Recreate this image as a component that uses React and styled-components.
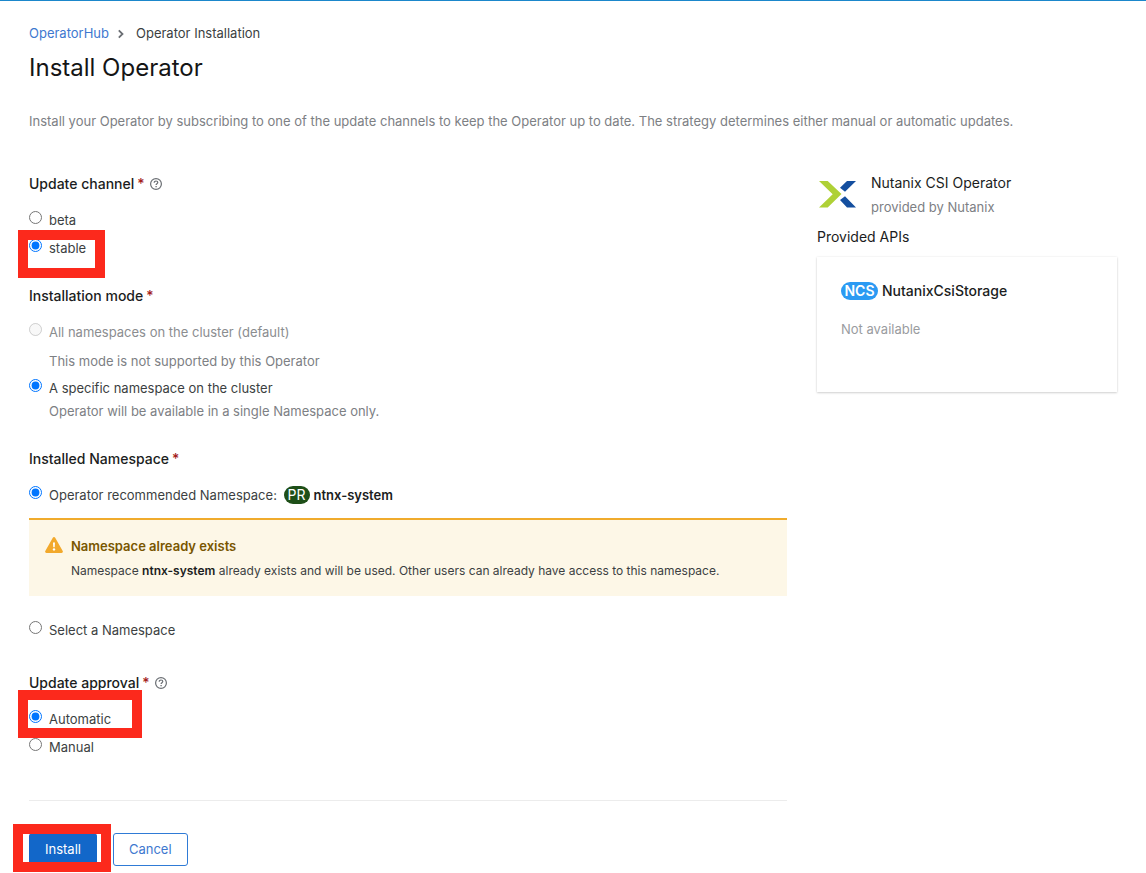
import React from "react";
import styled, { createGlobalStyle } from "styled-components";

const GlobalStyle = createGlobalStyle`
  *, *::before, *::after { box-sizing: border-box; }
  body {
    margin: 0;
    background: #fff;
    color: #3c3f42;
    font-family: Inter, "Liberation Sans", sans-serif;
    font-size: 13px;
    line-height: 20px;
  }
  h1, h2, h3, p, ol, fieldset, legend { margin: 0; padding: 0; border: 0; font-weight: 400; }
`;

const Page = styled.div`
  border-top: 1px solid #1b87cb;
  padding: 22px 29px 0;
`;

const Crumbs = styled.ol`
  display: flex;
  align-items: center;
  list-style: none;
  line-height: 21px;
  font-size: 13px;
`;

const Crumb = styled.li`
  display: flex;
  align-items: center;
  a { color: #3e78cf; text-decoration: none; }
  svg { margin: 0 11px 0 8px; }
`;

const Title = styled.h1`
  margin-top: 8px;
  font-size: 24px;
  line-height: 32px;
  color: #151515;
`;

const Intro = styled.p`
  margin-top: 27px;
  line-height: 21px;
  color: #7d8084;
`;

const Columns = styled.div`
  display: grid;
  grid-template-columns: minmax(0, 1fr) 300px;
  column-gap: 30px;
  margin-top: 42px;
`;

const Group = styled.fieldset`
  min-width: 0;
  margin-bottom: ${(p) => p.$after || 24}px;
`;

const Legend = styled.legend`
  display: flex;
  align-items: center;
  margin-bottom: 12px;
  font-size: 14px;
  font-weight: 500;
  line-height: 20px;
  color: #1b1d21;
  svg { margin-left: 5px; }
`;

const Star = styled.span`
  margin-left: 3px;
  color: #a3201a;
`;

const Choice = styled.label`
  position: relative;
  display: flex;
  align-items: flex-start;
  width: fit-content;
  gap: 7px;
  line-height: 28px;
  color: ${(p) => (p.$muted ? "#8b8d90" : "#3c3f42")};
`;

const Radio = styled.input`
  flex: none;
  width: 13px;
  height: 13px;
  margin: 5px 0 0;
`;

const Help = styled.p`
  margin: ${(p) => (p.$spaced ? "4px 0 2px" : "-2px 0 0")};
  padding-left: 20px;
  line-height: 22px;
  color: #7d8084;
`;

const Badge = styled.span`
  display: inline-flex;
  align-items: center;
  justify-content: center;
  height: 18px;
  width: ${(p) => p.$width}px;
  margin-right: 4px;
  margin-left: ${(p) => p.$before || 0}px;
  border-radius: 9px;
  background: ${(p) => p.$color};
  color: #fff;
  font-size: 14px;
  font-weight: ${(p) => p.$weight || 400};
  line-height: 18px;
`;

const Strong = styled.strong`
  font-weight: 600;
  color: #1b1d21;
`;

const Alert = styled.div`
  display: flex;
  gap: 8px;
  margin: 9px 0 20px;
  padding: 16px 16px 14px;
  border-top: 2px solid #f0ab2c;
  background: #fdf7e7;
  svg { flex: none; margin-top: 1px; }
`;

const AlertTitle = styled.h2`
  font-size: 13px;
  font-weight: 600;
  line-height: 20px;
  color: #795600;
`;

const AlertText = styled.p`
  margin-top: 4px;
  font-size: 12px;
  line-height: 22px;
`;

const Actions = styled.div`
  display: flex;
  gap: 16px;
  margin-top: 39px;
  padding: 32px 0 7px;
  border-top: 1px solid #ececec;
`;

const ActionSlot = styled.div`
  position: relative;
`;

const Button = styled.button`
  height: 33px;
  padding: 0 15px 2px;
  border: 1px solid ${(p) => (p.$primary ? "#1267c9" : "#2f7bd6")};
  border-radius: 3px;
  background: ${(p) => (p.$primary ? "#1267c9" : "#fff")};
  color: ${(p) => (p.$primary ? "#fff" : "#3e78cf")};
  font: inherit;
  font-size: 13px;
`;

/* Red callout frame drawn over the control it points out */
const Callout = styled.span`
  position: absolute;
  top: ${(p) => p.$top}px;
  left: ${(p) => p.$left}px;
  width: ${(p) => p.$width}px;
  height: 48px;
  border: 10px solid #fc291c;
  pointer-events: none;
`;

const Provider = styled.div`
  display: flex;
  gap: 15px;
  svg { flex: none; margin: 7px 0 0 2px; }
`;

const ProviderName = styled.h2`
  margin-top: -2px;
  font-size: 14px;
  line-height: 22px;
  color: #1b1d21;
`;

const ProviderBy = styled.p`
  margin-top: 3px;
  line-height: 20px;
  color: #7d8084;
`;

const ApisTitle = styled.h2`
  margin-top: 9px;
  font-size: 14px;
  line-height: 22px;
  color: #1b1d21;
`;

const Card = styled.section`
  min-height: 135px;
  margin-top: 9px;
  padding: 24px;
  box-shadow: 0 1px 2px rgba(3, 3, 3, 0.16), 0 0 2px rgba(3, 3, 3, 0.08);
`;

const CardTitle = styled.h3`
  display: flex;
  align-items: center;
  font-size: 14px;
  font-weight: 500;
  line-height: 20px;
  color: #1b1d21;
`;

const CardText = styled.p`
  margin-top: 18px;
  color: #9a9c9f;
`;

const Chevron = () => (
  <svg width="8" height="10" viewBox="0 0 8 10" fill="none" stroke="#6a6e73" strokeWidth="1.8" aria-hidden="true">
    <path d="M1.800 1.300 5.500 5 1.800 8.700" />
  </svg>
);

const HelpIcon = () => (
  <svg width="12" height="12" viewBox="0 0 12 12" fill="none" stroke="#6a6e73" role="img" aria-label="Help">
    <circle cx="6" cy="6" r="5.4" strokeWidth="1.2" />
    <path d="M4.2 4.7c0-1 .8-1.7 1.8-1.7s1.8.6 1.8 1.5c0 1.1-1.7 1.2-1.7 2.4" strokeWidth="1.2" />
    <path d="M6.1 7.9v1.3" strokeWidth="1.3" />
  </svg>
);

const WarningIcon = () => (
  <svg width="18" height="17" viewBox="0 0 18 17" aria-hidden="true">
    <path d="M7.8.8a1.4 1.4 0 0 1 2.4 0l7.5 13.1a1.4 1.4 0 0 1-1.2 2.1h-15A1.4 1.4 0 0 1 .3 13.900z" fill="#f2a92c" />
    <path d="M8 5.500h2l-.3 4.700H8.300z" fill="#fff" />
    <circle cx="9" cy="12.400" r="1.200" fill="#fff" />
  </svg>
);

const NutanixLogo = () => (
  <svg width="37" height="27" viewBox="0 0 37 27" role="img" aria-label="Nutanix">
    <path d="M0 0h8.700L22.500 13 8.700 26.500H0L13.700 13.200z" fill="#afd136" />
    <path d="M28 0h9L26 10.800 21 6.800zM21 19l5-3.700L37 26.500h-9z" fill="#144f9f" />
  </svg>
);

function Option({ name, label, muted, children, ...rest }) {
  return (
    <Choice $muted={muted}>
      <Radio type="radio" name={name} {...rest} />
      <span>{label}</span>
      {children}
    </Choice>
  );
}

const FieldTitle = ({ children, help }) => (
  <Legend>
    {children}
    <Star>*</Star>
    {help && <HelpIcon />}
  </Legend>
);

export default function App() {
  return (
    <>
      <GlobalStyle />
      <Page>
        <nav aria-label="Breadcrumb">
          <Crumbs>
            <Crumb>
              <a href="#operatorhub">OperatorHub</a>
              <Chevron />
            </Crumb>
            <Crumb aria-current="page">Operator Installation</Crumb>
          </Crumbs>
        </nav>
        <Title>Install Operator</Title>
        <Intro>
          Install your Operator by subscribing to one of the update channels to keep the Operator up to
          date. The strategy determines either manual or automatic updates.
        </Intro>

        <Columns>
          <form onSubmit={(e) => e.preventDefault()}>
            <Group>
              <FieldTitle help>Update channel</FieldTitle>
              <Option name="channel" label="beta" />
              <Option name="channel" label="stable" defaultChecked>
                <Callout $top={-4} $left={-11} $width={87} />
              </Option>
            </Group>

            <Group $after={27}>
              <FieldTitle>Installation mode</FieldTitle>
              <Option name="mode" label="All namespaces on the cluster (default)" muted disabled />
              <Help $spaced>This mode is not supported by this Operator</Help>
              <Option name="mode" label="A specific namespace on the cluster" defaultChecked />
              <Help>Operator will be available in a single Namespace only.</Help>
            </Group>

            <Group $after={29}>
              <FieldTitle>Installed Namespace</FieldTitle>
              <Option
                name="namespace"
                defaultChecked
                label={
                  <>
                    Operator recommended Namespace:{" "}
                    <Badge $width={26} $before={3} $color="#1e4f18">PR</Badge>
                    <Strong>ntnx-system</Strong>
                  </>
                }
              />
              <Alert>
                <WarningIcon />
                <div>
                  <AlertTitle>Namespace already exists</AlertTitle>
                  <AlertText>
                    Namespace <Strong>ntnx-system</Strong> already exists and will be used. Other users
                    can already have access to this namespace.
                  </AlertText>
                </div>
              </Alert>
              <Option name="namespace" label="Select a Namespace" />
            </Group>

            <Group $after={0}>
              <FieldTitle help>Update approval</FieldTitle>
              <Option name="approval" label="Automatic" defaultChecked>
                <Callout $top={-15} $left={-11} $width={124} />
              </Option>
              <Option name="approval" label="Manual" />
            </Group>

            <Actions>
              <ActionSlot>
                <Button type="submit" $primary>Install</Button>
                <Callout $top={-9} $left={-16} $width={98} />
              </ActionSlot>
              <Button type="button">Cancel</Button>
            </Actions>
          </form>

          <aside>
            <Provider>
              <NutanixLogo />
              <div>
                <ProviderName>Nutanix CSI Operator</ProviderName>
                <ProviderBy>provided by Nutanix</ProviderBy>
              </div>
            </Provider>
            <ApisTitle>Provided APIs</ApisTitle>
            <Card>
              <CardTitle>
                <Badge $width={37} $color="#2b9af3" $weight={600}>NCS</Badge>
                NutanixCsiStorage
              </CardTitle>
              <CardText>Not available</CardText>
            </Card>
          </aside>
        </Columns>
      </Page>
    </>
  );
}
